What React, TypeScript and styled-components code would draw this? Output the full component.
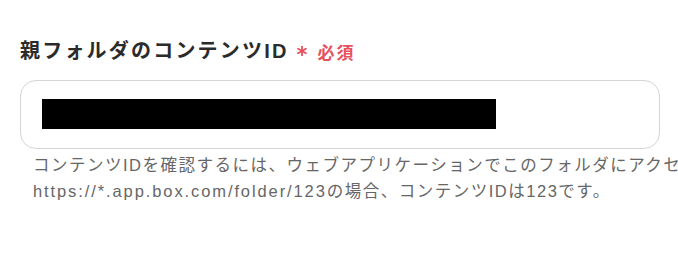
import styled, { createGlobalStyle } from 'styled-components';

const GlobalStyle = createGlobalStyle`
    html, body {
        margin: 0;
        background: #ffffff;
        overflow: hidden;
    }
    body {
        font-family: 'Liberation Sans', 'Noto Sans CJK JP', sans-serif;
    }
`;

const Root = styled.div`
    padding: 35px 18px 0 20px;
    width: 640px;
`;

const Label = styled.div`
    display: flex;
    align-items: center;
    height: 28px;
    margin-bottom: 17px;
`;

const LabelText = styled.span`
    font-size: 20px;
    font-weight: 700;
    letter-spacing: 2.2px;
    color: #2b2b2b;
`;

const Required = styled.span`
    display: flex;
    align-items: center;
    margin-left: 8px;
    padding-top: 4px;
    color: #e6515f;
    font-weight: 700;
    font-size: 17px;
    letter-spacing: 2px;
`;

const Asterisk = styled.svg`
    width: 10px;
    height: 10px;
    margin-right: 11px;
`;

const Field = styled.div`
    box-sizing: border-box;
    display: flex;
    align-items: center;
    width: 640px;
    height: 69px;
    padding: 0 0 2px 21px;
    border: 1px solid #d4d4d9;
    border-radius: 16px;
`;

const Redacted = styled.span`
    display: block;
    width: 454px;
    height: 30px;
    background: #000000;
`;

const Help = styled.p`
    margin: 4px 0 0 13px;
    font-size: 16.5px;
    line-height: 25.5px;
    letter-spacing: 1.5px;
    color: #666666;
    white-space: nowrap;
`;

const Url = styled.span`
    letter-spacing: 1.9px;
`;

const App = () => {
    return (
        <>
            <GlobalStyle />
            <Root>
                <Label>
                    <LabelText>親フォルダのコンテンツID</LabelText>
                    <Required>
                        <Asterisk viewBox="0 0 10 10">
                            <g stroke="#e6515f" strokeWidth="1.8" strokeLinecap="round">
                                <line x1="5" y1="0.5" x2="5" y2="9.5" />
                                <line x1="1.1" y1="2.75" x2="8.9" y2="7.25" />
                                <line x1="1.1" y1="7.25" x2="8.9" y2="2.75" />
                            </g>
                        </Asterisk>
                        必須
                    </Required>
                </Label>
                <Field>
                    <Redacted />
                </Field>
                <Help>
                    コンテンツIDを確認するには、ウェブアプリケーションでこのフォルダにアクセスします。
                    <br />
                    <Url>https://*.app.box.com/folder/123</Url>の場合、コンテンツIDは123です。
                </Help>
            </Root>
        </>
    );
};

export default App;
